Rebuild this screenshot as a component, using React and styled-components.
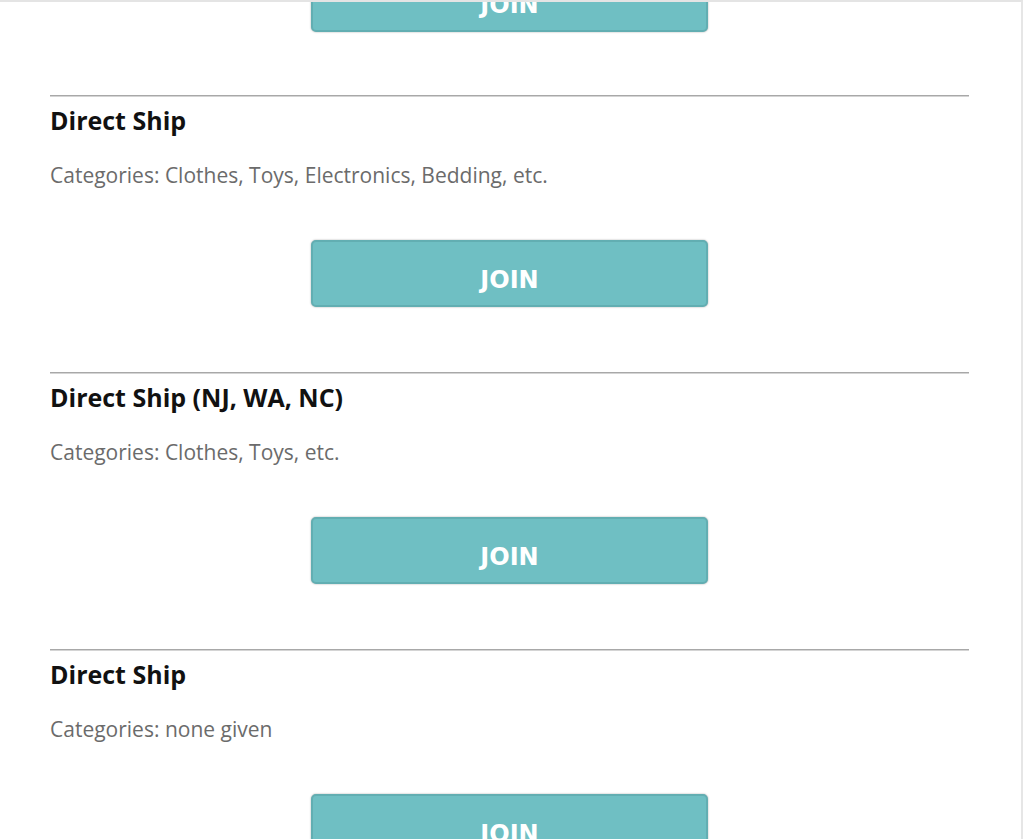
import styled, { createGlobalStyle } from "styled-components";

const GlobalStyle = createGlobalStyle`
  body {
    margin: 0;
    background: #fff;
    font-family: "Open Sans", "Liberation Sans", sans-serif;
  }
`;

const Page = styled.div`
  width: 1023px;
  height: 839px;
  overflow: hidden;
  box-sizing: border-box;
  border-top: 2px solid #e4e4e4;
  border-right: 2px solid #e6e6e6;
`;

const List = styled.div`
  width: 919px;
  margin: -37px 0 0 50px;
  display: flex;
  flex-direction: column;
`;

const Section = styled.section`
  display: flex;
  flex-direction: column;
  padding-bottom: ${(p) => (p.$first ? "63px" : "65px")};
  border-top: ${(p) => (p.$first ? "none" : "1px solid #a8a8a8")};
  box-shadow: ${(p) => (p.$first ? "none" : "inset 0 1px 0 #d4d4d4")};
`;

const Title = styled.h2`
  margin: 9px 0 0;
  font-size: 25px;
  line-height: 30px;
  font-weight: 700;
  color: #111;
`;

const Categories = styled.p`
  margin: 27px 0 0;
  font-size: 21px;
  line-height: 26px;
  color: #6b6b6b;
`;

const ButtonRow = styled.div`
  display: flex;
  justify-content: center;
  margin-top: ${(p) => (p.$flush ? "0" : "52px")};
`;

const JoinButton = styled.button`
  width: 397px;
  height: 67px;
  box-sizing: border-box;
  background: #6fbfc3;
  border: 2px solid #62aeb2;
  border-radius: 5px;
  box-shadow: 0 0 2px rgba(0, 0, 0, 0.35);
  color: #fff;
  font-family: "DejaVu Sans", Verdana, sans-serif;
  font-weight: 700;
  font-size: 24px;
  padding: 12px 0 0;
  cursor: pointer;
`;

const stores = [
  { name: "Direct Ship", cats: "Clothes, Toys, Electronics, Bedding, etc." },
  { name: "Direct Ship (NJ, WA, NC)", cats: "Clothes, Toys, etc." },
  { name: "Direct Ship", cats: "none given" },
];

const App = () => {
  return (
    <Page>
      <GlobalStyle />
      <List>
        <Section $first>
          <ButtonRow $flush>
            <JoinButton>JOIN</JoinButton>
          </ButtonRow>
        </Section>
        {stores.map((s, i) => (
          <Section key={i}>
            <Title>{s.name}</Title>
            <Categories>Categories: {s.cats}</Categories>
            <ButtonRow>
              <JoinButton>JOIN</JoinButton>
            </ButtonRow>
          </Section>
        ))}
      </List>
    </Page>
  );
};

export default App;
